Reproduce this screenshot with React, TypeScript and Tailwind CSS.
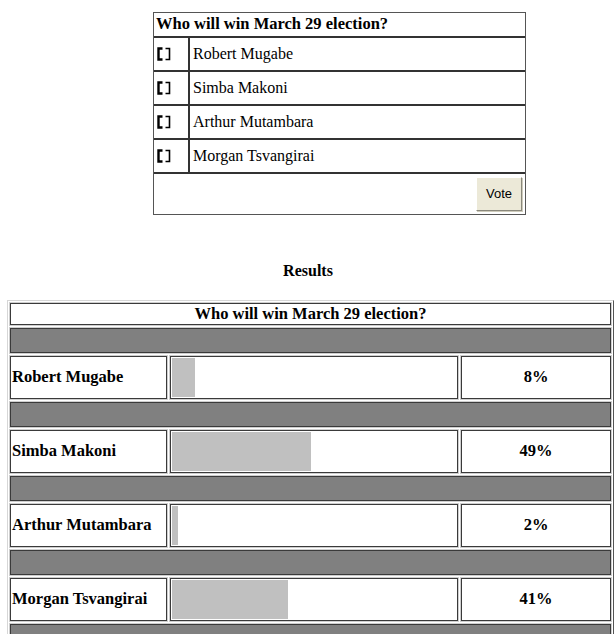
import React from 'react';

type Candidate = { name: string; pct: number };

const candidates: Candidate[] = [
  { name: 'Robert Mugabe', pct: 8 },
  { name: 'Simba Makoni', pct: 49 },
  { name: 'Arthur Mutambara', pct: 2 },
  { name: 'Morgan Tsvangirai', pct: 41 },
];

const question = 'Who will win March 29 election?';

// the little unticked box drawn by the old browser
const Box = () => (
  <svg width="14" height="14" viewBox="0 0 14 14" fill="none" stroke="#000">
    <path d="M5.5 1.5H1.5V12.5H5.5" strokeWidth="2.4" />
    <path d="M8.5 1.5H12.5V12.5H8.5" strokeWidth="1.6" />
  </svg>
);

const Ballot = () => (
  <div className="ml-[153px] mt-[12px] w-[373px] border border-[#555] bg-white">
    <div className="flex h-[25px] items-center border-b-2 border-[#333] px-[2px] text-[16.5px] font-bold">
      {question}
    </div>
    {candidates.map((c) => (
      <div key={c.name} className="flex h-[34px] border-b-2 border-[#333]">
        <div className="flex w-[36px] items-center border-r-2 border-[#333] pl-[3px]">
          <Box />
        </div>
        <div className="flex items-center pl-[3px] text-[16px]">{c.name}</div>
      </div>
    ))}
    <div className="flex h-[40px] items-center justify-end pr-[3px]">
      <button className="h-[34px] w-[46px] border border-t-white border-l-white border-r-[#8a887c] border-b-[#8a887c] bg-[#ece9d8] font-['Liberation_Sans',sans-serif] text-[13px] text-black shadow-[1px_1px_0_#cfccbc]">
        Vote
      </button>
    </div>
  </div>
);

const cell = 'border border-[#3a3a3a] bg-white shadow-[0_0_0_1px_#cfcfcf]';
const band = 'col-span-3 h-[25px] border border-[#3a3a3a] bg-[#808080] shadow-[0_0_0_1px_#cfcfcf]';

const Results = () => (
  <div className="ml-[7px] mt-[20px] w-[607px] border border-t-[#d6d6d6] border-l-[#d6d6d6] border-r-[#555] border-b-[#555] p-[2px]">
    <div className="grid grid-cols-[157px_288px_150px] gap-[3px]">
      <div className={`${cell} col-span-3 flex h-[22px] items-center justify-center text-[16.5px] font-bold`}>
        {question}
      </div>
      <div className={band} />
      {candidates.map((c) => (
        <React.Fragment key={c.name}>
          <div className={`${cell} flex h-[43px] items-center pl-[1px] text-[16.5px] font-bold`}>{c.name}</div>
          <div className={`${cell} h-[43px] p-[1px]`}>
            <div className="h-full bg-[#c0c0c0]" style={{ width: `${c.pct}%` }} />
          </div>
          <div className={`${cell} flex h-[43px] items-center justify-center text-[16.5px] font-bold`}>{c.pct}%</div>
          <div className={band} />
        </React.Fragment>
      ))}
    </div>
  </div>
);

export default function App() {
  return (
    <div className="h-[634px] w-[616px] overflow-hidden bg-white font-['Liberation_Serif',serif] text-black">
      <Ballot />
      <h3 className="mt-[47px] text-center text-[16px] font-bold leading-[18px]">Results</h3>
      <Results />
    </div>
  );
}
